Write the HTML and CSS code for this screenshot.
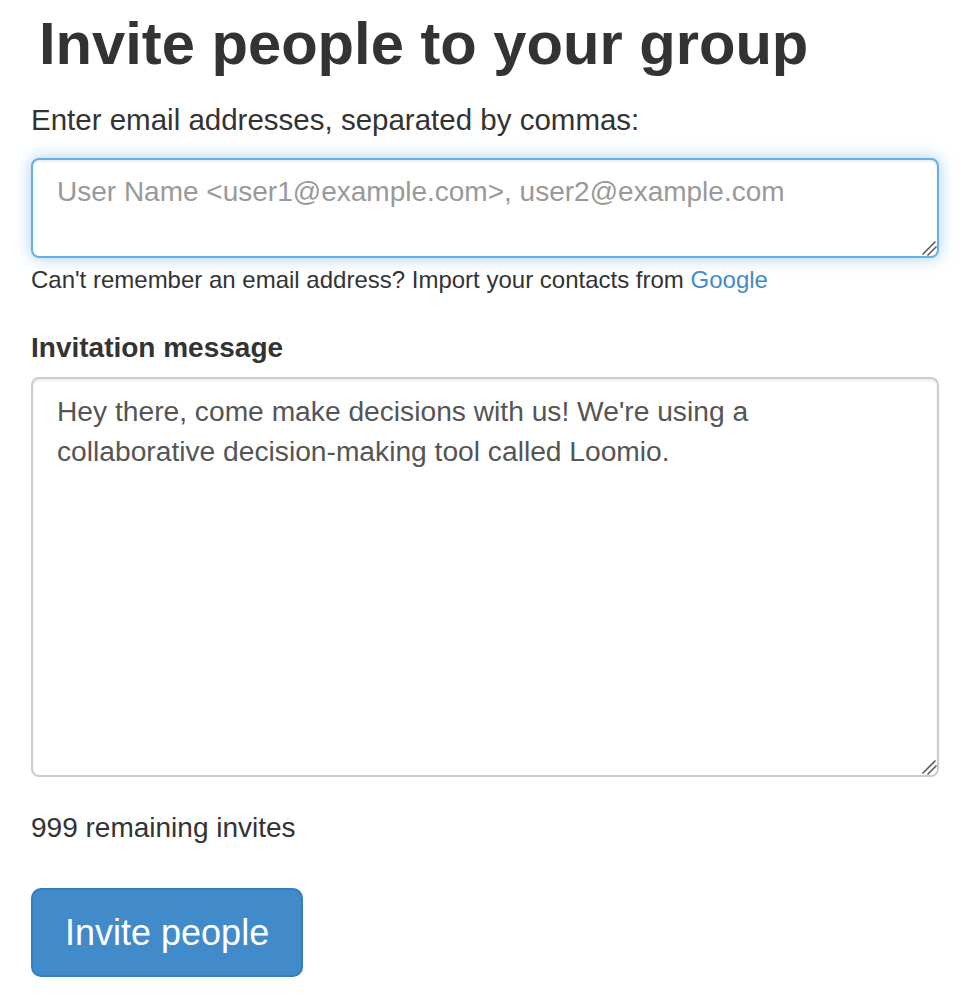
FILE: index.html
```html
<!DOCTYPE html>
<html lang="en">
<head>
<meta charset="utf-8">
<title>Invite people to your group</title>
<link rel="stylesheet" href="styles.css">
</head>
<body>
<main class="page">
  <h1 class="title">Invite people to your group</h1>
  <form class="invite-form">
    <label class="field-label" for="emails">Enter email addresses, separated by commas:</label>
    <div class="field">
      <textarea id="emails" class="input input-focus input-emails" placeholder="User Name <user1@example.com>, user2@example.com"></textarea>
      <svg class="grip" width="20" height="20" viewBox="0 0 20 20" aria-hidden="true"><path d="M4 16 L16 4 M9 17 L17 9" /></svg>
    </div>
    <p class="help">Can't remember an email address? Import your contacts from <a class="link" href="#">Google</a></p>
    <label class="field-label strong" for="message">Invitation message</label>
    <div class="field">
      <textarea id="message" class="input input-message">Hey there, come make decisions with us! We're using a collaborative decision-making tool called Loomio.</textarea>
      <svg class="grip" width="20" height="20" viewBox="0 0 20 20" aria-hidden="true"><path d="M4 16 L16 4 M9 17 L17 9" /></svg>
    </div>
    <p class="remaining">999 remaining invites</p>
    <button type="button" class="btn-primary">Invite people</button>
  </form>
</main>
</body>
</html>
```

FILE: styles.css
```css
html, body {
  margin: 0;
  padding: 0;
  background: #ffffff;
}

body {
  font-family: "Liberation Sans", Arial, Helvetica, sans-serif;
  color: #333333;
  font-size: 28px;
  line-height: 40px;
}

.page {
  padding: 11px 0 0 31px;
  width: 908px;
}

.title {
  margin: 0;
  padding-left: 8px;
  font-size: 59.7px;
  line-height: 66px;
  font-weight: bold;
  color: #333333;
}

.invite-form {
  display: flex;
  flex-direction: column;
  align-items: flex-start;
  margin-top: 23px;
}

.field-label {
  display: block;
  font-size: 29.5px;
  line-height: 40px;
  font-weight: normal;
  margin-bottom: 18px;
}

.field-label.strong {
  font-size: 28px;
  font-weight: bold;
  margin-bottom: 9px;
}

.field {
  position: relative;
  width: 908px;
}

.grip {
  position: absolute;
  right: 0;
  bottom: 0;
  pointer-events: none;
}

.grip path {
  stroke: #5f5f5f;
  stroke-width: 1.7;
  stroke-linecap: round;
  fill: none;
}

.input {
  box-sizing: border-box;
  width: 908px;
  margin: 0;
  display: block;
  font-family: "Liberation Sans", Arial, Helvetica, sans-serif;
  font-size: 28px;
  line-height: 40px;
  color: #555555;
  background: #ffffff;
  border: 2px solid #cccccc;
  border-radius: 8px;
  padding: 12px 24px;
  box-shadow: inset 0 2px 2px rgba(0, 0, 0, 0.075);
  outline: none;
  resize: none;
}

.input::placeholder {
  color: #999999;
  opacity: 1;
}

.input-focus {
  border-color: #66afe9;
  box-shadow: inset 0 2px 2px rgba(0, 0, 0, 0.075), 0 0 16px rgba(102, 175, 233, 0.6);
}

.input-emails {
  height: 100px;
}

.input-message {
  height: 400px;
  font-size: 28.2px;
  padding-right: 34px;
}

.help {
  margin: 5px 0 0 0;
  font-size: 24px;
  line-height: 34px;
  color: #333333;
}

.link {
  color: #428bca;
  text-decoration: none;
}

.help + .field-label {
  margin-top: 31px;
}

.remaining {
  margin: 31px 0 0 0;
  font-size: 28px;
  line-height: 40px;
}

.btn-primary {
  margin-top: 40px;
  box-sizing: border-box;
  height: 89px;
  padding: 0 32px;
  font-family: "Liberation Sans", Arial, Helvetica, sans-serif;
  font-size: 36px;
  line-height: 45px;
  color: #ffffff;
  background: #428bca;
  border: 2px solid #357ebd;
  border-radius: 10px;
  cursor: pointer;
}
```
